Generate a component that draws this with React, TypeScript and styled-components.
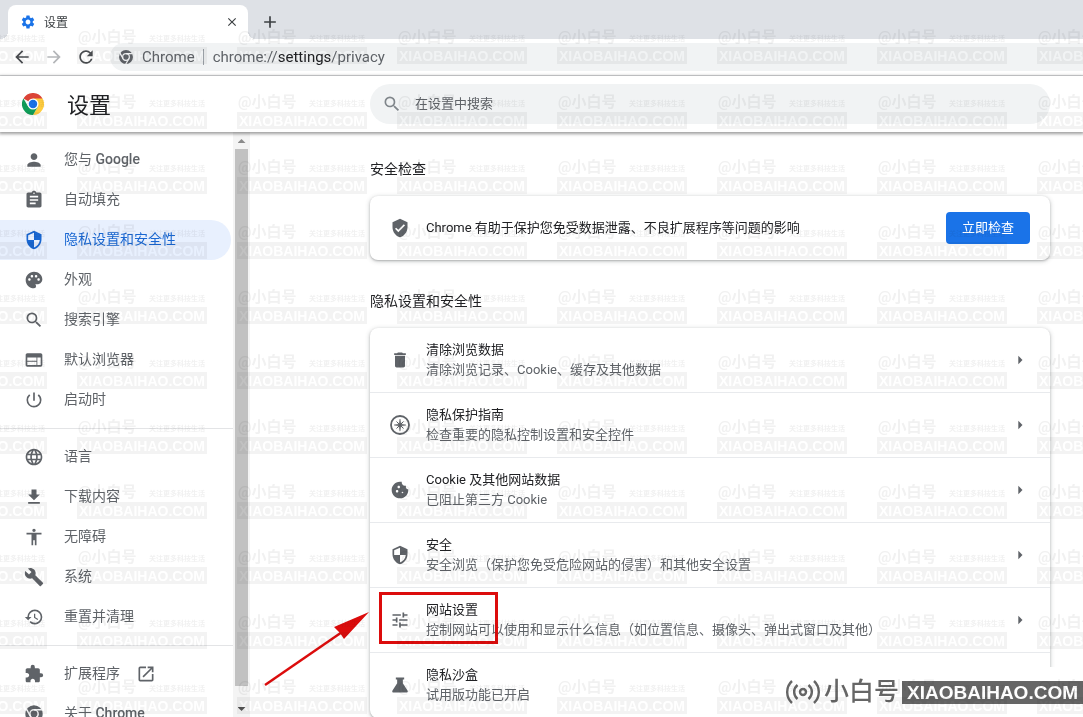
import React from "react";
import styled, { createGlobalStyle, css } from "styled-components";
import {
  MdPerson, MdAssignment, MdPalette, MdSearch, MdWeb, MdPowerSettingsNew, MdLanguage,
  MdFileDownload, MdAccessibility, MdBuild, MdRestore, MdExtension, MdOpenInNew,
  MdVerifiedUser, MdDelete, MdCookie, MdTune, MdSettings, MdArrowBack, MdArrowForward,
  MdRefresh, MdClose, MdAdd, MdArrowRight, MdSecurity,
} from "react-icons/md";

const GlobalStyle = createGlobalStyle`
  * { box-sizing: border-box; }
  body {
    margin: 0;
    overflow: hidden;
    background: #fff;
    color: #202124;
    font-family: Roboto, "Noto Sans CJK SC", sans-serif;
    font-size: 13px;
    line-height: 20px;
  }
  button, input { font: inherit; }
  svg { display: block; flex: none; }
`;

const Window = styled.div`
  position: relative;
  display: flex;
  flex-direction: column;
  height: 100vh;
  overflow: hidden;
`;

const TabStrip = styled.div`
  display: flex;
  align-items: flex-end;
  gap: 10px;
  height: 39px;
  padding-left: 8px;
  background: #dee1e6;
`;

const Tab = styled.div`
  position: relative;
  display: flex;
  align-items: center;
  gap: 8px;
  width: 240px;
  height: 34px;
  padding: 0 4px 0 12px;
  border-radius: 8px 8px 0 0;
  background: #fff;
  font-size: 12px;
  color: #3c4043;

  &::before, &::after {
    content: "";
    position: absolute;
    bottom: 0;
    width: 8px;
    height: 8px;
  }
  &::before {
    right: 100%;
    background: radial-gradient(circle at 0 0, transparent 8px, #fff 8px);
  }
  &::after {
    left: 100%;
    background: radial-gradient(circle at 100% 0, transparent 8px, #fff 8px);
  }
`;

const TabTitle = styled.span`
  flex: 1;
  padding-top: 2px;
`;

const IconButton = styled.button<{ $color?: string }>`
  display: flex;
  align-items: center;
  justify-content: center;
  width: 24px;
  height: 34px;
  padding: 0;
  border: 0;
  background: none;
  color: ${(p) => p.$color ?? "#3c4043"};
`;

const Toolbar = styled.div`
  display: flex;
  align-items: center;
  gap: 8px;
  height: 37px;
  padding-left: 10px;
  border-bottom: 1px solid #dcdee0;
`;

const AddressBar = styled.div`
  display: flex;
  flex: 1;
  align-items: center;
  gap: 8px;
  height: 28px;
  margin-left: 4px;
  padding-left: 8px;
  border-radius: 14px 0 0 14px;
  background: #f1f3f4;
  color: #5f6368;
  font-size: 15px;
`;

const AddressDivider = styled.span`
  width: 1px;
  height: 16px;
  margin-right: 1px;
  background: #9aa0a6;
`;

const AddressHost = styled.span`
  color: #202124;
`;

const Header = styled.header`
  position: relative;
  z-index: 1;
  display: flex;
  align-items: center;
  height: 56px;
  padding: 0 33px 0 22px;
  background: #fff;
  box-shadow: 0 1px 3px 1px rgba(0, 0, 0, 0.38);
`;

const Brand = styled.div`
  display: flex;
  flex: none;
  align-items: center;
  gap: 23px;
  width: 348px;
`;

const PageTitle = styled.h1`
  margin: 0;
  padding-top: 3px;
  font-size: 22px;
  font-weight: 400;
  line-height: 32px;
`;

const SearchBox = styled.label`
  display: flex;
  flex: 1;
  align-items: center;
  gap: 13px;
  height: 40px;
  padding: 0 12px;
  border-radius: 20px;
  background: #f1f3f4;
  color: #80868b;
`;

const SearchInput = styled.input`
  flex: 1;
  min-width: 0;
  padding: 0;
  border: 0;
  outline: 0;
  background: none;
  &::placeholder { color: #5f6368; opacity: 1; }
`;

const Body = styled.div`
  display: flex;
  flex: 1;
  min-height: 0;
`;

const Sidebar = styled.nav`
  flex: none;
  width: 233px;
  padding-top: 8px;
  overflow: hidden;
`;

const MenuLink = styled.a<{ $active?: boolean }>`
  display: flex;
  align-items: center;
  height: 40px;
  margin-right: 2px;
  padding-left: 24px;
  border-radius: 0 20px 20px 0;
  color: #5f6368;
  font-size: 14px;
  text-decoration: none;
  ${(p) => p.$active && css`
    background: #e8f0fe;
    color: #1967d2;
  `}
`;

const Strong = styled.span`
  font-weight: 500;
`;

const MenuLabel = styled.span`
  padding: 0 16px 2px 20px;
`;

const MenuDivider = styled.hr`
  height: 1px;
  margin: 8px 0;
  border: 0;
  background: #e3e4e6;
`;

const ScrollTrack = styled.div`
  display: flex;
  flex: none;
  flex-direction: column;
  align-items: center;
  width: 17px;
  background: #f4f4f4;
`;

const ScrollThumb = styled.div`
  flex: 1;
  width: 13px;
  margin-bottom: 14px;
  background: #c1c1c1;
`;

const Triangle = styled.span<{ $up?: boolean }>`
  width: 8px;
  height: 4px;
  margin-top: 7px;
  background: ${(p) => (p.$up ? "#8b8b8b" : "#505050")};
  clip-path: ${(p) => (p.$up ? "polygon(50% 0, 100% 100%, 0 100%)" : "polygon(0 0, 100% 0, 50% 100%)")};
`;

const ScrollEnd = styled.div`
  display: flex;
  justify-content: center;
  height: 17px;
`;

const Content = styled.main`
  flex: 1;
  min-width: 0;
  padding: 27px 33px 0 120px;
`;

const Section = styled.section`
  margin-bottom: 31px;
`;

const SectionTitle = styled.h2`
  margin: 0 0 17px;
  font-size: 14px;
  font-weight: 400;
`;

const Card = styled.div`
  border-radius: 8px;
  background: #fff;
  box-shadow: 0 1px 2px rgba(60, 64, 67, 0.3), 0 1px 4px 1px rgba(60, 64, 67, 0.18);
`;

const CheckRow = styled.div`
  display: flex;
  align-items: center;
  gap: 16px;
  height: 64px;
  padding: 0 20px;
  > svg { color: #5f6368; }
`;

const CheckText = styled.span`
  flex: 1;
`;

const CheckButton = styled.button`
  height: 32px;
  padding: 0 16px;
  border: 0;
  border-radius: 4px;
  background: #1a73e8;
  color: #fff;
`;

const SettingRow = styled.a`
  display: flex;
  align-items: center;
  gap: 16px;
  height: 65px;
  padding: 0 20px;
  border-bottom: 1px solid #e8eaed;
  color: #5f6368;
  text-decoration: none;
  &:last-child { border-bottom-color: transparent; }
`;

const RowText = styled.span`
  display: flex;
  flex: 1;
  flex-direction: column;
`;

const RowTitle = styled.span`
  color: #202124;
`;

const Annotation = styled.svg`
  position: absolute;
  top: 585px;
  left: 260px;
`;

const WatermarkLayer = styled.div`
  position: absolute;
  z-index: 3;
  top: 28px;
  left: -83px;
  display: grid;
  grid-template-columns: repeat(8, 160px);
  grid-auto-rows: 65px;
  mix-blend-mode: multiply;
  pointer-events: none;
  user-select: none;
  white-space: nowrap;
`;

const Mark = styled.div`
  width: 130px;
`;

const MarkTop = styled.div`
  display: flex;
  align-items: center;
  justify-content: space-between;
  height: 19px;
  padding: 0 2px 2px 1px;
  color: #f1f1f1;
  font-size: 15px;
  font-weight: 700;
  line-height: 16px;
`;

const MarkNote = styled.span`
  padding-top: 4px;
  font-size: 7px;
  line-height: 12px;
`;

const MarkBox = styled.div`
  height: 17px;
  background: #f3f3f3;
  color: #fff;
  font: 700 14px/18px "Liberation Sans", sans-serif;
  text-align: center;
`;

const Logo = styled.div`
  position: absolute;
  z-index: 2;
  right: 0;
  bottom: 0;
  display: flex;
  align-items: center;
  height: 50px;
  padding-left: 4px;
  background: #fff;
  color: #666;
`;

const LogoName = styled.span`
  padding: 0 3px 0 4px;
  font-size: 25px;
  font-weight: 500;
  line-height: 28px;
`;

const LogoSite = styled.span`
  padding: 0 5px;
  background: #666;
  color: #fff;
  font: 700 19px/23px "Liberation Sans", sans-serif;
`;

const ChromeLogo = () => (
  <svg width="22" height="22" viewBox="0 0 24 24">
    <path d="M12 12 1.6 6A12 12 0 0 1 22.4 6Z" fill="#db4437" />
    <path d="M12 6H22.4A12 12 0 0 1 12 24L17.2 15Z" fill="#ffcd40" />
    <path d="M1.6 6A12 12 0 0 0 12 24L17.2 15H6.8Z" fill="#0f9d58" />
    <circle cx="12" cy="12" r="6" fill="#fff" />
    <circle cx="12" cy="12" r="4.6" fill="#1a73e8" />
  </svg>
);

const ChromeGlyph = ({ size }: { size: number }) => (
  <svg width={size} height={size} viewBox="0 0 24 24" fill="none">
    <circle cx="12" cy="12" r="10.4" fill="currentColor" />
    <circle cx="12" cy="12" r="5" stroke="#f4f5f6" strokeWidth="1.8" />
    <path d="M12 7H22M7.7 14.5 2.7 5.8M16.3 14.5 11.3 23.2" stroke="#f4f5f6" strokeWidth="1.8" />
  </svg>
);

const Compass = () => (
  <svg width="20" height="20" viewBox="0 0 20 20" fill="none" stroke="currentColor">
    <circle cx="10" cy="10" r="9" strokeWidth="1.8" />
    <path d="M10 4l1 5 5 1-5 1-1 5-1-5-5-1 5-1z" fill="currentColor" strokeWidth=".4" />
    <path d="M6.5 6.5l7 7M13.5 6.5l-7 7" strokeWidth="1" />
  </svg>
);

const Flask = () => (
  <svg width="20" height="20" viewBox="0 0 24 24" fill="currentColor">
    <path d="M7 3h10v2.4h-1.6V10L21 18.5c.8 1.2.1 2.5-1.3 2.5H4.3C2.9 21 2.2 19.7 3 18.5L8.6 10V5.4H7z" />
  </svg>
);

const MENU = [
  [
    { icon: <MdPerson size={20} />, label: <>您与 <Strong>Google</Strong></> },
    { icon: <MdAssignment size={20} />, label: "自动填充" },
    { icon: <MdSecurity size={20} />, label: "隐私设置和安全性", active: true },
    { icon: <MdPalette size={20} />, label: "外观" },
    { icon: <MdSearch size={20} />, label: "搜索引擎" },
    { icon: <MdWeb size={20} />, label: "默认浏览器" },
    { icon: <MdPowerSettingsNew size={20} />, label: "启动时" },
  ],
  [
    { icon: <MdLanguage size={20} />, label: "语言" },
    { icon: <MdFileDownload size={20} />, label: "下载内容" },
    { icon: <MdAccessibility size={20} />, label: "无障碍" },
    { icon: <MdBuild size={20} />, label: "系统" },
    { icon: <MdRestore size={20} />, label: "重置并清理" },
  ],
  [
    { icon: <MdExtension size={20} />, label: "扩展程序", external: true },
    { icon: <ChromeGlyph size={20} />, label: <>关于 <Strong>Chrome</Strong></> },
  ],
] as { icon: React.ReactNode; label: React.ReactNode; active?: boolean; external?: boolean }[][];

const SETTINGS = [
  { icon: <MdDelete size={20} />, title: "清除浏览数据", note: "清除浏览记录、Cookie、缓存及其他数据" },
  { icon: <Compass />, title: "隐私保护指南", note: "检查重要的隐私控制设置和安全控件" },
  { icon: <MdCookie size={20} />, title: "Cookie 及其他网站数据", note: "已阻止第三方 Cookie" },
  { icon: <MdSecurity size={20} />, title: "安全", note: "安全浏览（保护您免受危险网站的侵害）和其他安全设置" },
  { icon: <MdTune size={20} />, title: "网站设置", note: "控制网站可以使用和显示什么信息（如位置信息、摄像头、弹出式窗口及其他）" },
  { icon: <Flask />, title: "隐私沙盒", note: "试用版功能已开启" },
];

export default function App() {
  return (
    <Window>
      <GlobalStyle />
      <TabStrip>
        <Tab>
          <MdSettings size={16} color="#1a73e8" />
          <TabTitle>设置</TabTitle>
          <IconButton aria-label="关闭标签页"><MdClose size={14} /></IconButton>
        </Tab>
        <IconButton aria-label="新标签页"><MdAdd size={20} /></IconButton>
      </TabStrip>
      <Toolbar>
        <IconButton aria-label="后退" $color="#4a4d51"><MdArrowBack size={20} /></IconButton>
        <IconButton aria-label="前进" $color="#b4b6b9"><MdArrowForward size={20} /></IconButton>
        <IconButton aria-label="重新加载" $color="#4a4d51"><MdRefresh size={20} /></IconButton>
        <AddressBar>
          <ChromeGlyph size={16} />
          <span>Chrome</span>
          <AddressDivider />
          <span>chrome://<AddressHost>settings</AddressHost>/privacy</span>
        </AddressBar>
      </Toolbar>
      <Header>
        <Brand>
          <ChromeLogo />
          <PageTitle>设置</PageTitle>
        </Brand>
        <SearchBox>
          <MdSearch size={20} />
          <SearchInput type="search" placeholder="在设置中搜索" aria-label="在设置中搜索" />
        </SearchBox>
      </Header>
      <Body>
        <Sidebar>
          {MENU.map((group, g) => (
            <React.Fragment key={g}>
              {g > 0 && <MenuDivider />}
              {group.map((item, i) => (
                <MenuLink key={i} href="#" $active={item.active}>
                  {item.icon}
                  <MenuLabel>{item.label}</MenuLabel>
                  {item.external && <MdOpenInNew size={20} />}
                </MenuLink>
              ))}
            </React.Fragment>
          ))}
        </Sidebar>
        <ScrollTrack>
          <ScrollEnd><Triangle $up /></ScrollEnd>
          <ScrollThumb />
          <ScrollEnd><Triangle /></ScrollEnd>
        </ScrollTrack>
        <Content>
          <Section>
            <SectionTitle>安全检查</SectionTitle>
            <Card>
              <CheckRow>
                <MdVerifiedUser size={20} />
                <CheckText>Chrome 有助于保护您免受数据泄露、不良扩展程序等问题的影响</CheckText>
                <CheckButton>立即检查</CheckButton>
              </CheckRow>
            </Card>
          </Section>
          <Section>
            <SectionTitle>隐私设置和安全性</SectionTitle>
            <Card>
              {SETTINGS.map((s) => (
                <SettingRow key={s.title} href="#">
                  {s.icon}
                  <RowText>
                    <RowTitle>{s.title}</RowTitle>
                    <span>{s.note}</span>
                  </RowText>
                  <MdArrowRight size={20} />
                </SettingRow>
              ))}
            </Card>
          </Section>
        </Content>
      </Body>
      <Annotation width="240" height="104" viewBox="0 0 240 104" fill="none">
        <rect x="120.5" y="8.5" width="116" height="49" stroke="#dc0c0c" strokeWidth="3" />
        <path d="M5 100 85 45" stroke="#dc0c0c" strokeWidth="2.5" />
        <path d="M109 27 74 42 80 48 84 54Z" fill="#dc0c0c" />
      </Annotation>
      <Logo>
        <svg width="34" height="26" viewBox="0 0 34 26" fill="none" stroke="currentColor" strokeWidth="2.4">
          <circle cx="17" cy="13" r="3" />
          <path d="M11.5 6a9 9 0 0 0 0 14M22.5 6a9 9 0 0 1 0 14M6 2a15 15 0 0 0 0 22M28 2a15 15 0 0 1 0 22" />
        </svg>
        <LogoName>小白号</LogoName>
        <LogoSite>XIAOBAIHAO.COM</LogoSite>
      </Logo>
      <WatermarkLayer aria-hidden="true">
        {Array.from({ length: 88 }, (_, i) => (
          <Mark key={i}>
            <MarkTop>@小白号<MarkNote>关注更多科技生活</MarkNote></MarkTop>
            <MarkBox>XIAOBAIHAO.COM</MarkBox>
          </Mark>
        ))}
      </WatermarkLayer>
    </Window>
  );
}
